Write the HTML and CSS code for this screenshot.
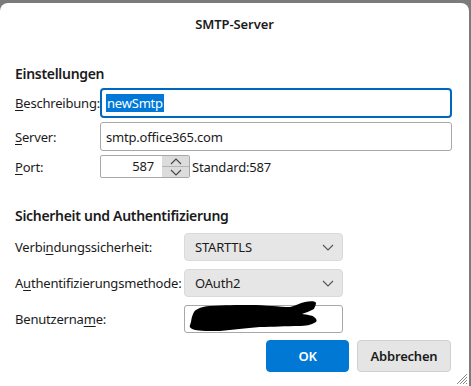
FILE: index.html
```html
<!DOCTYPE html>
<html lang="de">
<head>
<meta charset="utf-8">
<title>SMTP-Server</title>
<link rel="stylesheet" href="styles.css">
</head>
<body>
<div class="dialog">
  <div class="title">SMTP-Server</div>
  <div class="content">
    <h2 class="section first">Einstellungen</h2>
    <div class="grid grid-1">
      <label class="lbl"><u>B</u>eschreibung:</label>
      <div class="field focused"><span class="sel">newSmtp</span></div>
      <label class="lbl"><u>S</u>erver:</label>
      <div class="field">smtp.office365.com</div>
      <label class="lbl"><u>P</u>ort:</label>
      <div class="port-row">
        <div class="port">
          <div class="port-val">587</div>
          <div class="spin">
            <div class="spin-btn up"><svg width="12" height="7" viewBox="0 0 12 7"><path d="M1 6 L6 1 L11 6" fill="none" stroke="#444" stroke-width="1.1"/></svg></div>
            <div class="spin-btn"><svg width="12" height="7" viewBox="0 0 12 7"><path d="M1 1 L6 6 L11 1" fill="none" stroke="#444" stroke-width="1.1"/></svg></div>
          </div>
        </div>
        <span class="std">Standard:587</span>
      </div>
    </div>

    <h2 class="section second">Sicherheit und Authentifizierung</h2>
    <div class="grid grid-2">
      <label class="lbl">Verbi<u>n</u>dungssicherheit:</label>
      <div class="select">STARTTLS<svg class="chev" width="12" height="7" viewBox="0 0 12 7"><path d="M1 1 L6 6 L11 1" fill="none" stroke="#555" stroke-width="1.1"/></svg></div>
      <label class="lbl">A<u>u</u>thentifizierungsmethode:</label>
      <div class="select">OAuth2<svg class="chev" width="12" height="7" viewBox="0 0 12 7"><path d="M1 1 L6 6 L11 1" fill="none" stroke="#555" stroke-width="1.1"/></svg></div>
      <label class="lbl">Benutzerna<u>m</u>e:</label>
      <div class="field user">
        <svg class="scribble" width="140" height="34" viewBox="0 0 140 34">
          <path d="M6 22 C 7 15, 9 11, 11 10 C 16 7, 20 6, 25 6 C 40 5, 52 5, 65 5 C 80 5, 95 7, 105 7 C 110 6, 115 3, 120 2 C 125 1, 131 1, 131 3 C 131 6, 129 8, 129 9 C 125 11, 120 13, 117 14 C 122 15, 127 15, 129 17 C 132 19, 132 21, 131 22 C 126 25, 120 26, 115 26 C 100 26, 88 27, 75 27 C 60 28, 48 30, 35 31 C 24 31, 15 31, 10 30 C 6 29, 4 27, 5 25 Z" fill="#000"/>
        </svg>
      </div>
    </div>

    <div class="buttons">
      <button class="btn primary">OK</button>
      <button class="btn">Abbrechen</button>
    </div>
  </div>
  <svg class="grip" width="14" height="14" viewBox="0 0 14 14">
    <path d="M13 3 L3 13 M13 6 L6 13 M13 9 L9 13 M13 12 L12 13" stroke="#888" stroke-width="1"/>
  </svg>
</div>
</body>
</html>
```

FILE: styles.css
```css
* { box-sizing: border-box; }
html, body { margin: 0; padding: 0; }
body {
  background: #7b7b7b;
  width: 471px;
  height: 386px;
  overflow: hidden;
  font-family: "Noto Sans", "Open Sans", sans-serif;
  font-size: 13px;
  letter-spacing: -0.2px;
  color: #1b1b1b;
}
.dialog {
  position: relative;
  margin-top: 3px;
  width: 469px;
  height: 383px;
  background: #fff;
  border-radius: 8px 8px 0 0;
}
.title {
  height: 42px;
  line-height: 42px;
  text-align: center;
  font-weight: 600;
  font-size: 13px;
  letter-spacing: -0.1px;
}
.content {
  padding: 0 18px 0 15px;
}
.section {
  margin: 0;
  font-size: 14px;
  letter-spacing: -0.3px;
  font-weight: 600;
  line-height: 20px;
}
.section.first { margin-top: 19px; margin-bottom: 4px; }
.section.second { margin-top: 28px; margin-bottom: 7px; }
.grid {
  display: grid;
  align-items: center;
}
.grid-1 {
  grid-template-columns: 85px 352px;
  grid-template-rows: 30px 29px 23px;
  row-gap: 4px;
}
.grid-2 {
  grid-template-columns: 169px 159px;
  grid-template-rows: 28px 28px 28px;
  row-gap: 8px;
}
.lbl { white-space: nowrap; }
.lbl u { text-decoration-thickness: 1px; text-underline-offset: 2px; }
.field {
  height: 100%;
  border: 1px solid #a8a8a8;
  border-radius: 3px;
  padding: 0 5px;
  display: flex;
  align-items: center;
  background: #fff;
}
.field.focused {
  border: 2px solid #0067c0;
  border-radius: 4px;
  padding: 0 4px;
}
.sel {
  background: #0078d7;
  color: #fff;
  line-height: 18px;
  padding: 0 1px;
}
.port-row {
  display: flex;
  align-items: center;
  height: 100%;
}
.port {
  display: flex;
  width: 90px;
  height: 100%;
  border: 1px solid #a8a8a8;
  border-radius: 2px;
  overflow: hidden;
}
.port-val {
  flex: 1;
  text-align: right;
  padding-right: 8px;
  line-height: 21px;
}
.spin {
  width: 27px;
  background: #dcdcdc;
  display: flex;
  flex-direction: column;
}
.spin-btn {
  flex: 1;
  display: flex;
  align-items: center;
  justify-content: center;
}
.spin-btn.up { border-bottom: 1px solid #b4b4b4; }
.std { margin-left: 2px; }
.select {
  height: 100%;
  background: #e6e6e6;
  border: 1px solid #dadada;
  border-radius: 4px;
  display: flex;
  align-items: center;
  padding: 0 8px 0 10px;
  justify-content: space-between;
}
.field.user {
  position: relative;
  padding: 0;
}
.scribble {
  position: absolute;
  left: 0;
  top: -6px;
}
.buttons {
  display: flex;
  justify-content: flex-end;
  gap: 8px;
  margin-top: 7px;
}
.btn {
  height: 32px;
  border-radius: 4px;
  font-family: inherit;
  font-size: 13px;
  letter-spacing: -0.2px;
  font-weight: 600;
  border: 1px solid #d0d0d0;
  background: #e5e5e5;
  color: #1b1b1b;
  width: 94px;
  padding: 0;
}
.btn.primary {
  width: 83px;
  background: #0078d4;
  border-color: #0078d4;
  color: #fff;
}
.grip {
  position: absolute;
  right: 1px;
  bottom: 1px;
}
```
